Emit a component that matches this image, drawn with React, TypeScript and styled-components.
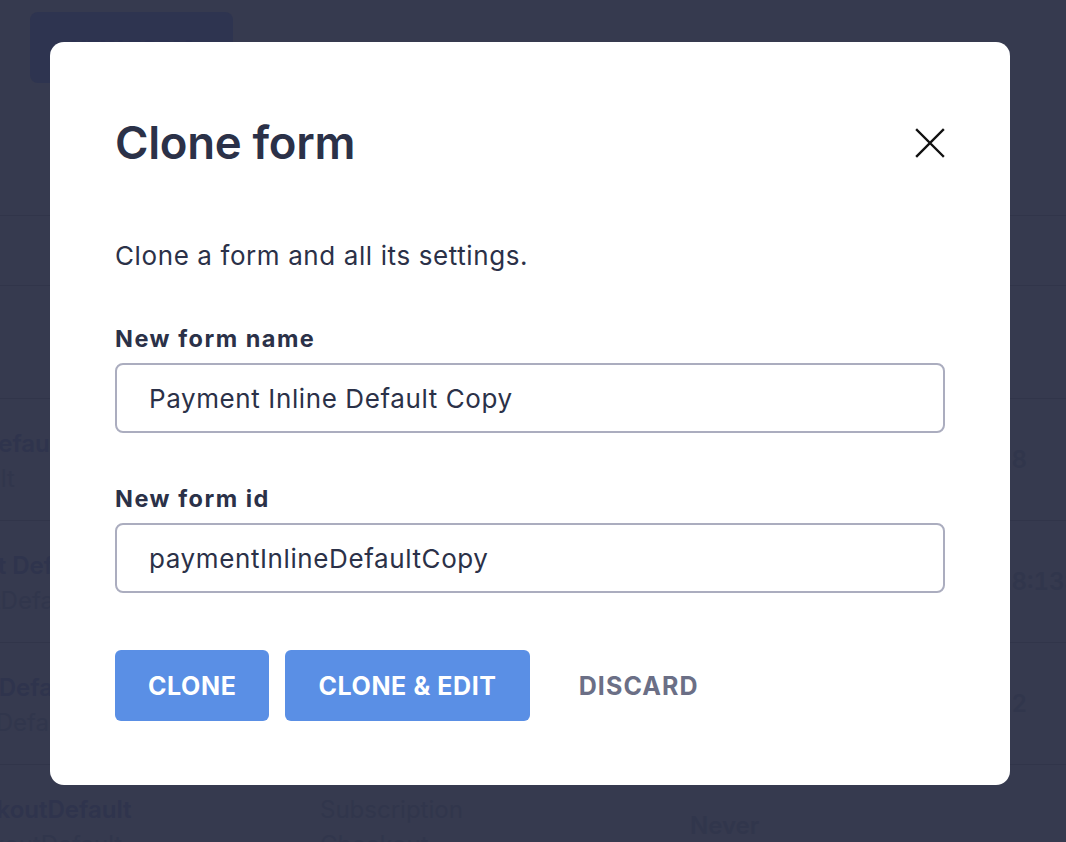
import styled, { createGlobalStyle } from 'styled-components';

const GlobalStyle = createGlobalStyle`
  html, body {
    margin: 0;
    padding: 0;
    background: #363a4f;
    font-family: Inter, 'Noto Sans', sans-serif;
  }
  * {
    box-sizing: border-box;
  }
`;

type Row = {
  name: string;
  id: string;
  type: string;
  subtype?: string;
  used: string;
  time: string;
};

const ROWS: Row[] = [
  { name: 'PopDefault', id: 'default', type: 'Payment', used: 'Today', time: '18' },
  { name: 'About Default', id: 'aboutDefault', type: 'Checkout', used: 'Today', time: '18:13:05' },
  { name: 'InlineDefault', id: 'inlineDefault', type: 'Inline', used: 'Yesterday', time: '12' },
  {
    name: 'CheckoutDefault',
    id: 'checkoutDefault',
    type: 'Subscription',
    subtype: 'Checkout',
    used: 'Never',
    time: '',
  },
];

const Page = styled.div`
  position: relative;
  height: 842px;
  overflow: hidden;
  background: #363a4f;
`;

const TopBar = styled.div`
  height: 216px;
  padding: 12px 30px;
  border-bottom: 1px solid #31354a;
`;

const GhostButton = styled.div`
  width: 203px;
  height: 71px;
  border-radius: 8px;
  background: #2e3450;
  color: #2b3150;
  font-weight: 700;
  font-size: 22px;
  display: flex;
  align-items: center;
  justify-content: center;
`;

const FilterBar = styled.div`
  height: 70px;
  border-bottom: 1px solid #31354a;
`;

const HeaderRow = styled.div`
  height: 113px;
  border-bottom: 1px solid #31354a;
`;

const Table = styled.div`
  margin-left: -64px;
`;

const TableRow = styled.div`
  display: grid;
  grid-template-columns: 384px 370px 306px 1fr;
  height: 122px;
  border-bottom: 1px solid #31354a;
  align-items: center;
  font-size: 24px;
  white-space: nowrap;
`;

const NameCell = styled.div`
  display: flex;
  flex-direction: column;
  gap: 6px;
  align-self: start;
  padding-top: 30px;
`;

const Name = styled.span`
  font-weight: 600;
  color: #2f344d;
`;

const SubText = styled.span`
  color: #31364c;
`;

const Cell = styled.div<{ $top?: boolean }>`
  color: #31364c;
  font-weight: ${({ $top }) => ($top ? 400 : 600)};
  align-self: ${({ $top }) => ($top ? 'start' : 'center')};
  padding-top: ${({ $top }) => ($top ? '30px' : '0')};
  display: flex;
  flex-direction: column;
  gap: 6px;
  font-variant-numeric: tabular-nums;
`;

const Overlay = styled.div`
  position: absolute;
  inset: 0;
  padding: 42px 0 0 50px;
`;

const Modal = styled.div`
  width: 960px;
  height: 743px;
  background: #ffffff;
  border-radius: 14px;
  padding: 75px 65px 64px;
  color: #2b3148;
`;

const Header = styled.div`
  display: flex;
  align-items: center;
  justify-content: space-between;
`;

const Title = styled.h1`
  margin: 0;
  font-size: 45.5px;
  line-height: 52px;
  font-weight: 600;
  letter-spacing: -0.3px;
  color: #2b3148;
`;

const CloseButton = styled.button`
  border: 0;
  background: none;
  padding: 0;
  width: 30px;
  height: 30px;
  display: flex;
  align-items: center;
  justify-content: center;
  cursor: pointer;
`;

const Description = styled.p`
  margin: 69px 0 0;
  font-size: 26px;
  line-height: 36px;
  letter-spacing: 0.6px;
  color: #2b3148;
`;

const Field = styled.div<{ $gap: number }>`
  margin-top: ${({ $gap }) => $gap}px;
  display: flex;
  flex-direction: column;
  gap: 9px;
`;

const Label = styled.label`
  font-size: 23.5px;
  line-height: 30px;
  font-weight: 700;
  letter-spacing: 1.5px;
  color: #2b3148;
`;

const Input = styled.input`
  height: 70px;
  width: 100%;
  border: 2px solid #abadbf;
  border-radius: 8px;
  padding: 0 32px;
  font-family: inherit;
  font-size: 26px;
  letter-spacing: 0.6px;
  color: #2b3148;
  outline: none;
`;

const Actions = styled.div`
  margin-top: 57px;
  display: flex;
  gap: 16px;
`;

const Button = styled.button<{ $ghost?: boolean }>`
  height: 71px;
  padding: 0 33px;
  border: 0;
  border-radius: 6px;
  background: ${({ $ghost }) => ($ghost ? 'transparent' : '#5a8fe5')};
  color: ${({ $ghost }) => ($ghost ? '#6b6f86' : '#ffffff')};
  font-family: inherit;
  font-size: 25px;
  font-weight: 700;
  letter-spacing: ${({ $ghost }) => ($ghost ? '1.1px' : '0.6px')};
  text-transform: uppercase;
  cursor: pointer;
`;

const CloseIcon = () => (
  <svg width="30" height="30" viewBox="0 0 30 30" fill="none">
    <path d="M2 2L28 28M28 2L2 28" stroke="#111111" strokeWidth="2.4" strokeLinecap="square" />
  </svg>
);

export default function App() {
  return (
    <>
      <GlobalStyle />
      <Page>
        <TopBar>
          <GhostButton>NEW FORM</GhostButton>
        </TopBar>
        <FilterBar />
        <HeaderRow />
        <Table>
          {ROWS.map((row, i) => (
            <TableRow key={i}>
              <NameCell>
                <Name>{row.name}</Name>
                <SubText>{row.id}</SubText>
              </NameCell>
              <Cell $top>
                <span>{row.type}</span>
                {row.subtype && <span>{row.subtype}</span>}
              </Cell>
              <Cell>{row.used}</Cell>
              <Cell>{row.time}</Cell>
            </TableRow>
          ))}
        </Table>
        <Overlay>
          <Modal>
            <Header>
              <Title>Clone form</Title>
              <CloseButton aria-label="Close">
                <CloseIcon />
              </CloseButton>
            </Header>
            <Description>Clone a form and all its settings.</Description>
            <Field $gap={50}>
              <Label>New form name</Label>
              <Input defaultValue="Payment Inline Default Copy" />
            </Field>
            <Field $gap={51}>
              <Label>New form id</Label>
              <Input defaultValue="paymentInlineDefaultCopy" />
            </Field>
            <Actions>
              <Button>Clone</Button>
              <Button>Clone &amp; Edit</Button>
              <Button $ghost>Discard</Button>
            </Actions>
          </Modal>
        </Overlay>
      </Page>
    </>
  );
}
